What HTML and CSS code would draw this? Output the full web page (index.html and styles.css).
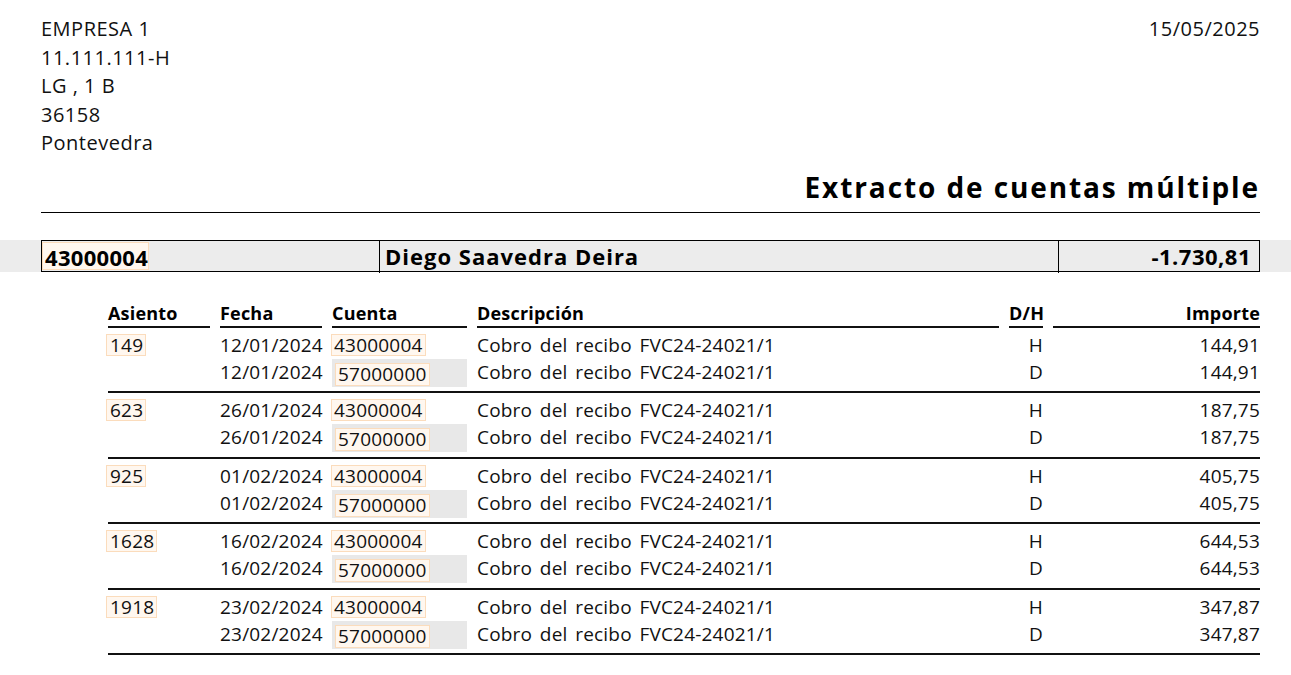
FILE: index.html
```html
<!DOCTYPE html>
<html lang="es">
<head>
<meta charset="utf-8">
<title>Extracto de cuentas múltiple</title>
<link rel="stylesheet" href="styles.css">
</head>
<body>
<div class="head">
  <div class="top">
    <div class="company">
      <div>EMPRESA 1</div>
      <div>11.111.111-H</div>
      <div>LG , 1 B</div>
      <div>36158</div>
      <div>Pontevedra</div>
    </div>
    <div class="date">15/05/2025</div>
  </div>
  <h1 class="title">Extracto de cuentas múltiple</h1>
</div>

<div class="band">
  <div class="acct">
    <div class="acct-cell"><span class="hl hl-acct">43000004</span></div>
    <div class="acct-cell acct-name">Diego Saavedra Deira</div>
    <div class="acct-cell acct-total">-1.730,81</div>
  </div>
</div>

<div class="table">
  <div class="thead">
    <div class="th">Asiento</div>
    <div class="th">Fecha</div>
    <div class="th">Cuenta</div>
    <div class="th">Descripción</div>
    <div class="th r">D/H</div>
    <div class="th r">Importe</div>
  </div>

  <div class="group">
    <div class="row">
      <div class="c"><span class="hl hl-as">149</span></div>
      <div class="c">12/01/2024</div>
      <div class="c"><span class="hl hl-cta">43000004</span></div>
      <div class="c desc">Cobro del recibo FVC24-24021/1</div>
      <div class="c r">H</div>
      <div class="c r">144,91</div>
    </div>
    <div class="row row2">
      <div class="c"></div>
      <div class="c">12/01/2024</div>
      <div class="c"><div class="cta-gray"><span class="hl hl-cta2">57000000</span></div></div>
      <div class="c desc">Cobro del recibo FVC24-24021/1</div>
      <div class="c r">D</div>
      <div class="c r">144,91</div>
    </div>
  </div>

  <div class="group">
    <div class="row">
      <div class="c"><span class="hl hl-as">623</span></div>
      <div class="c">26/01/2024</div>
      <div class="c"><span class="hl hl-cta">43000004</span></div>
      <div class="c desc">Cobro del recibo FVC24-24021/1</div>
      <div class="c r">H</div>
      <div class="c r">187,75</div>
    </div>
    <div class="row row2">
      <div class="c"></div>
      <div class="c">26/01/2024</div>
      <div class="c"><div class="cta-gray"><span class="hl hl-cta2">57000000</span></div></div>
      <div class="c desc">Cobro del recibo FVC24-24021/1</div>
      <div class="c r">D</div>
      <div class="c r">187,75</div>
    </div>
  </div>

  <div class="group">
    <div class="row">
      <div class="c"><span class="hl hl-as">925</span></div>
      <div class="c">01/02/2024</div>
      <div class="c"><span class="hl hl-cta">43000004</span></div>
      <div class="c desc">Cobro del recibo FVC24-24021/1</div>
      <div class="c r">H</div>
      <div class="c r">405,75</div>
    </div>
    <div class="row row2">
      <div class="c"></div>
      <div class="c">01/02/2024</div>
      <div class="c"><div class="cta-gray"><span class="hl hl-cta2">57000000</span></div></div>
      <div class="c desc">Cobro del recibo FVC24-24021/1</div>
      <div class="c r">D</div>
      <div class="c r">405,75</div>
    </div>
  </div>

  <div class="group">
    <div class="row">
      <div class="c"><span class="hl hl-as">1628</span></div>
      <div class="c">16/02/2024</div>
      <div class="c"><span class="hl hl-cta">43000004</span></div>
      <div class="c desc">Cobro del recibo FVC24-24021/1</div>
      <div class="c r">H</div>
      <div class="c r">644,53</div>
    </div>
    <div class="row row2">
      <div class="c"></div>
      <div class="c">16/02/2024</div>
      <div class="c"><div class="cta-gray"><span class="hl hl-cta2">57000000</span></div></div>
      <div class="c desc">Cobro del recibo FVC24-24021/1</div>
      <div class="c r">D</div>
      <div class="c r">644,53</div>
    </div>
  </div>

  <div class="group">
    <div class="row">
      <div class="c"><span class="hl hl-as">1918</span></div>
      <div class="c">23/02/2024</div>
      <div class="c"><span class="hl hl-cta">43000004</span></div>
      <div class="c desc">Cobro del recibo FVC24-24021/1</div>
      <div class="c r">H</div>
      <div class="c r">347,87</div>
    </div>
    <div class="row row2">
      <div class="c"></div>
      <div class="c">23/02/2024</div>
      <div class="c"><div class="cta-gray"><span class="hl hl-cta2">57000000</span></div></div>
      <div class="c desc">Cobro del recibo FVC24-24021/1</div>
      <div class="c r">D</div>
      <div class="c r">347,87</div>
    </div>
  </div>
</div>
</body>
</html>
```

FILE: styles.css
```css
html, body {
  margin: 0;
  padding: 0;
  background: #fff;
}
body {
  font-family: "Open Sans", "DejaVu Sans", sans-serif;
  color: #111;
}

.head {
  padding: 15px 31px 0 41px;
}
.top {
  display: flex;
  justify-content: space-between;
  align-items: flex-start;
  font-size: 20px;
  line-height: 28.5px;
  letter-spacing: 0.5px;
}
.title {
  margin: 12px 0 0 0;
  padding-bottom: 8px;
  border-bottom: 1px solid #000;
  text-align: right;
  font-size: 28px;
  line-height: 34px;
  font-weight: 700;
  letter-spacing: 1.9px;
  color: #000;
}

.band {
  margin-top: 27px;
  background: #ececec;
  padding: 0 31px 0 41px;
}
.acct {
  display: grid;
  grid-template-columns: 337px 679px 1fr;
  border: 1px solid #000;
  height: 30px;
  font-size: 22px;
  font-weight: 700;
  line-height: 30px;
  color: #000;
}
.acct-cell {
  padding: 0 5px;
  white-space: nowrap;
}
.acct-cell + .acct-cell {
  border-left: 1px solid #000;
}
.acct-cell:first-child {
  padding: 1px 0 1px 0;
}
.acct-name {
  letter-spacing: 1px;
}
.acct-total {
  text-align: right;
  padding-right: 8px;
  letter-spacing: 0.5px;
}

.hl {
  display: inline-block;
  background: #fff7ef;
  border: 1px solid #fbdcbc;
  box-sizing: border-box;
}
.hl-acct {
  height: 28px;
  line-height: 28px;
  padding: 0 3px 0 2px;
  width: 107px;
  letter-spacing: 0.3px;
}

.table {
  margin-top: 29px;
  padding: 0 31px 0 108px;
  font-size: 19px;
  letter-spacing: 0.2px;
}
.thead, .row {
  display: grid;
  grid-template-columns: 102px 102px 135px 1fr 34px 207px;
  column-gap: 10px;
}
.th {
  font-weight: 700;
  font-size: 18px;
  line-height: 24px;
  padding-bottom: 1px;
  border-bottom: 2px solid #111;
  color: #000;
  letter-spacing: 0.2px;
}
.r {
  text-align: right;
}
.desc {
  word-spacing: 2.5px;
}

.group {
  padding: 4px 0 5.5px 0;
  border-bottom: 2px solid #111;
}
.row {
  height: 26px;
  line-height: 26px;
}
.row2 {
  height: 28px;
  line-height: 29px;
}
.c {
  white-space: nowrap;
}

.hl-as {
  height: 22px;
  line-height: 20px;
  margin: 2px 0 0 -2px;
  padding: 0 2px 0 3px;
  vertical-align: top;
}
.hl-cta {
  height: 22px;
  line-height: 20px;
  margin: 2px 0 0 -1px;
  padding: 0 2px 0 2px;
  vertical-align: top;
}
.cta-gray {
  background: #e8e8e8;
  height: 28px;
  padding: 4px 0 0 3px;
  margin-top: 1px;
  box-sizing: border-box;
}
.hl-cta2 {
  height: 23px;
  line-height: 21px;
  padding: 0 2px 0 2px;
  vertical-align: top;
}
```
